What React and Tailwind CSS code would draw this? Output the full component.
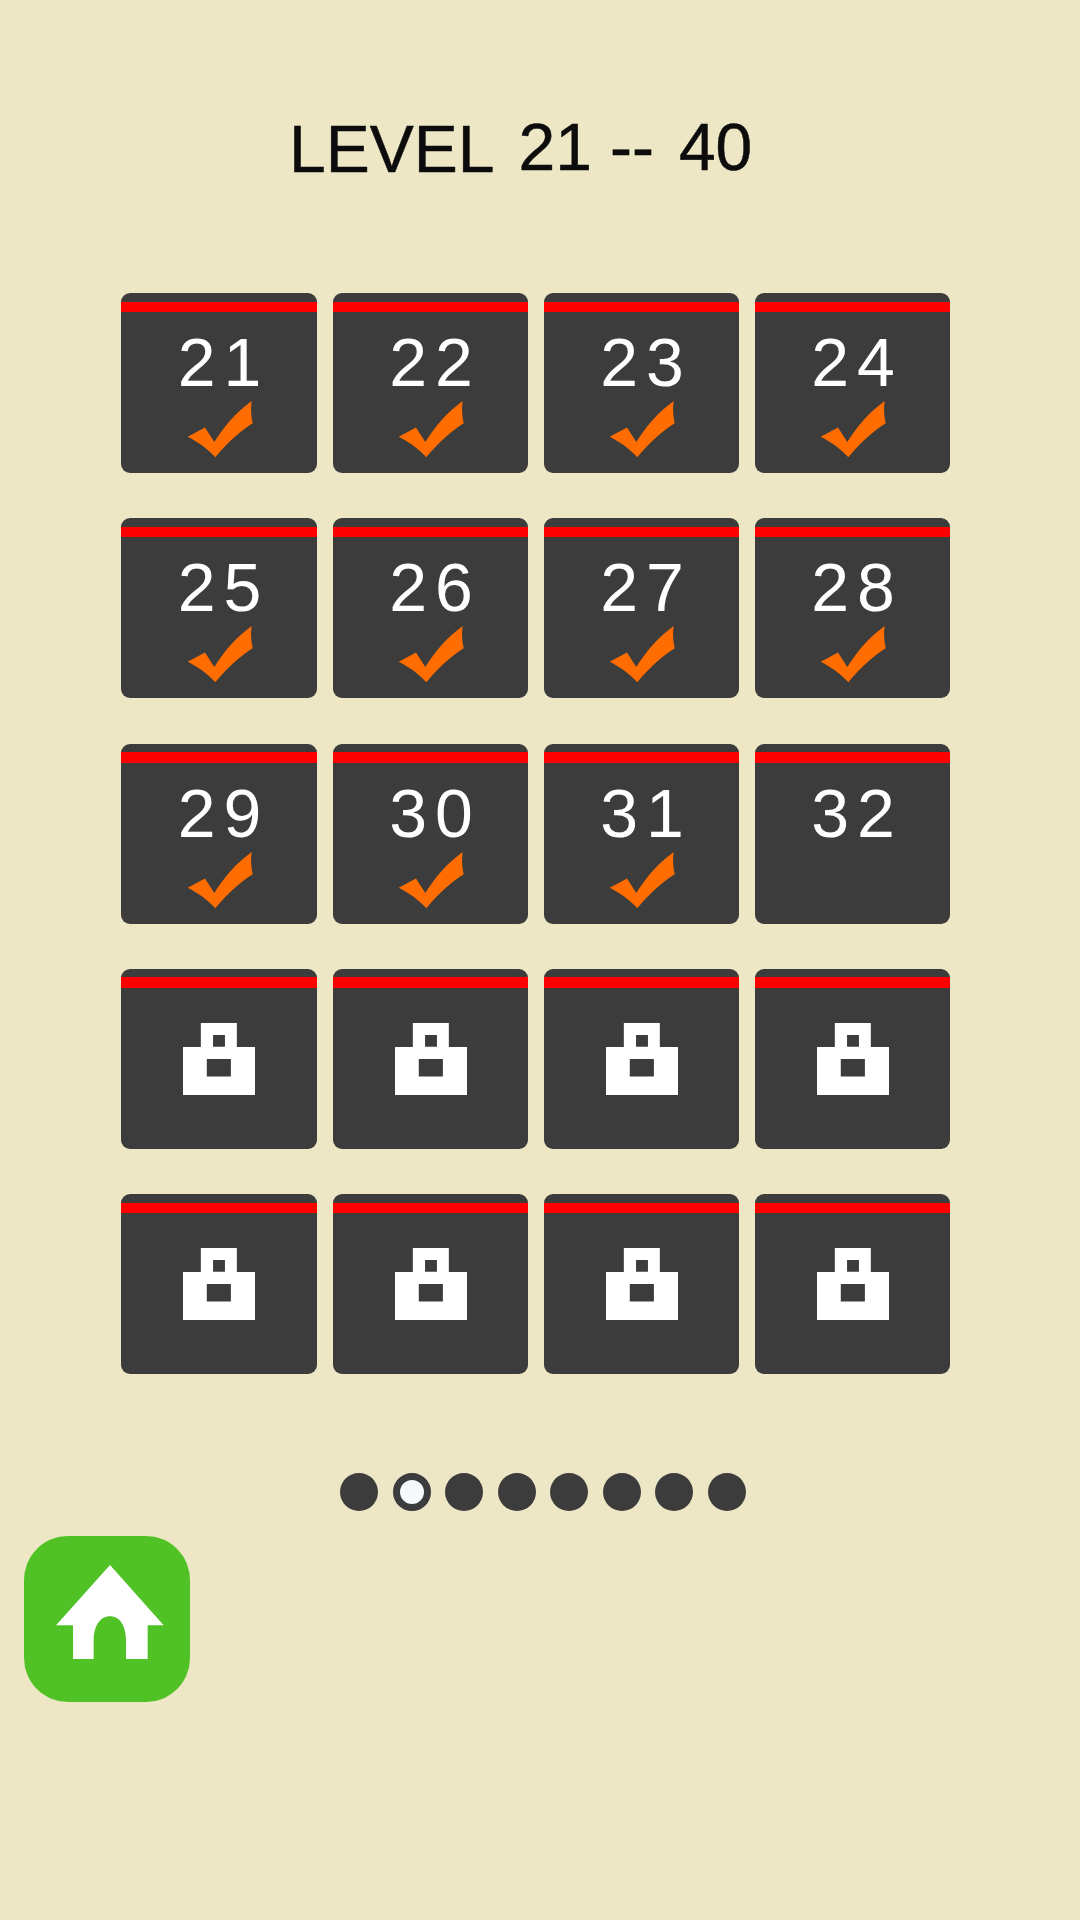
const levels = [21, 22, 23, 24, 25, 26, 27, 28, 29, 30, 31, 32];
const done = (n) => n < 32;

function Check() {
  return (
    <svg width="67" height="58" viewBox="0 0 67 58" className="block">
      <path d="M0.7 36.7 L18 27.5 L27.3 42 C36 28 48 13 64.7 1 C63.5 8 64 16 65.7 23.3 C56 29 42 41 28.3 57.3 C20 48 11 42 0.7 36.7Z" fill="#ff6d00" />
    </svg>
  );
}

function Lock() {
  return (
    <svg width="72" height="72" viewBox="248 219 218 218" className="block">
      <path
        fillRule="evenodd"
        fill="#ffffff"
        d="M302 219H411V292H466V437H248V292H302ZM339 255V291H375V255ZM320 328V381H393V328Z"
      />
    </svg>
  );
}

function Tile({ n }) {
  return (
    <div className="h-[180px] overflow-hidden rounded-[9px] bg-[#3c3c3c] pt-[8.5px]">
      <div className="h-[10.5px] bg-[#ff0000]" />
      {n ? (
        <div className="flex flex-col items-center">
          <div className="mt-[22px] h-[56px] pl-[9px] font-['Liberation_Sans',sans-serif] text-[68px] leading-[56px] tracking-[8px] text-white">
            {n}
          </div>
          {done(n) && (
            <div className="mt-[10px] pl-[2px]">
              <Check />
            </div>
          )}
        </div>
      ) : (
        <div className="flex justify-center pt-[35px]">
          <Lock />
        </div>
      )}
    </div>
  );
}

function Home() {
  return (
    <div className="ml-[24px] mt-[25px] h-[166px] w-[166px] rounded-[44px] bg-[#50c226] pl-[32px] pt-[29px]">
      <svg width="107.7" height="94.3" viewBox="167 343 323 283" className="block">
        <path
          d="M329 343 L490 524 L442 524 L442 626 L377 626 L377 570 C377 525 358 497 329 497 C300 497 280 525 280 570 L280 626 L218 626 L218 524 L167 524Z"
          fill="#ffffff"
        />
      </svg>
    </div>
  );
}

export default function App() {
  return (
    <div className="h-[1920px] w-[1080px] overflow-hidden bg-[#eee7c5] font-['Liberation_Sans',sans-serif]">
      <div className="flex h-[293px] items-baseline pl-[289px] pt-[109px] text-[#0c0c0c] [-webkit-text-stroke:0.5px_#0c0c0c]">
        <span className="text-[66px] leading-[80px]">LEVEL</span>
        <span className="ml-[24px] -translate-y-[2px] text-[66px] leading-[80px]">21</span>
        <span className="ml-[18px] -translate-y-[2px] text-[66px] leading-[80px]">--</span>
        <span className="ml-[25px] -translate-y-[2px] text-[66px] leading-[80px]">40</span>
      </div>

      <div className="ml-[121px] grid grid-cols-[196px_195px_195px_195px] gap-x-[16px] gap-y-[45.25px]">
        {levels.map((n) => (
          <Tile key={n} n={n} />
        ))}
        {Array.from({ length: 8 }, (_, i) => (
          <Tile key={i} />
        ))}
      </div>

      <div className="ml-[340px] mt-[98.5px] flex gap-[14.5px]">
        {[0, 1, 2, 3, 4, 5, 6, 7].map((i) =>
          i === 1 ? (
            <div key={i} className="h-[38px] w-[38px] rounded-full border-[7px] border-[#3c3c3c] bg-[#f5f9fc]" />
          ) : (
            <div key={i} className="h-[38px] w-[38px] rounded-full bg-[#3c3c3c]" />
          )
        )}
      </div>

      <Home />
    </div>
  );
}
